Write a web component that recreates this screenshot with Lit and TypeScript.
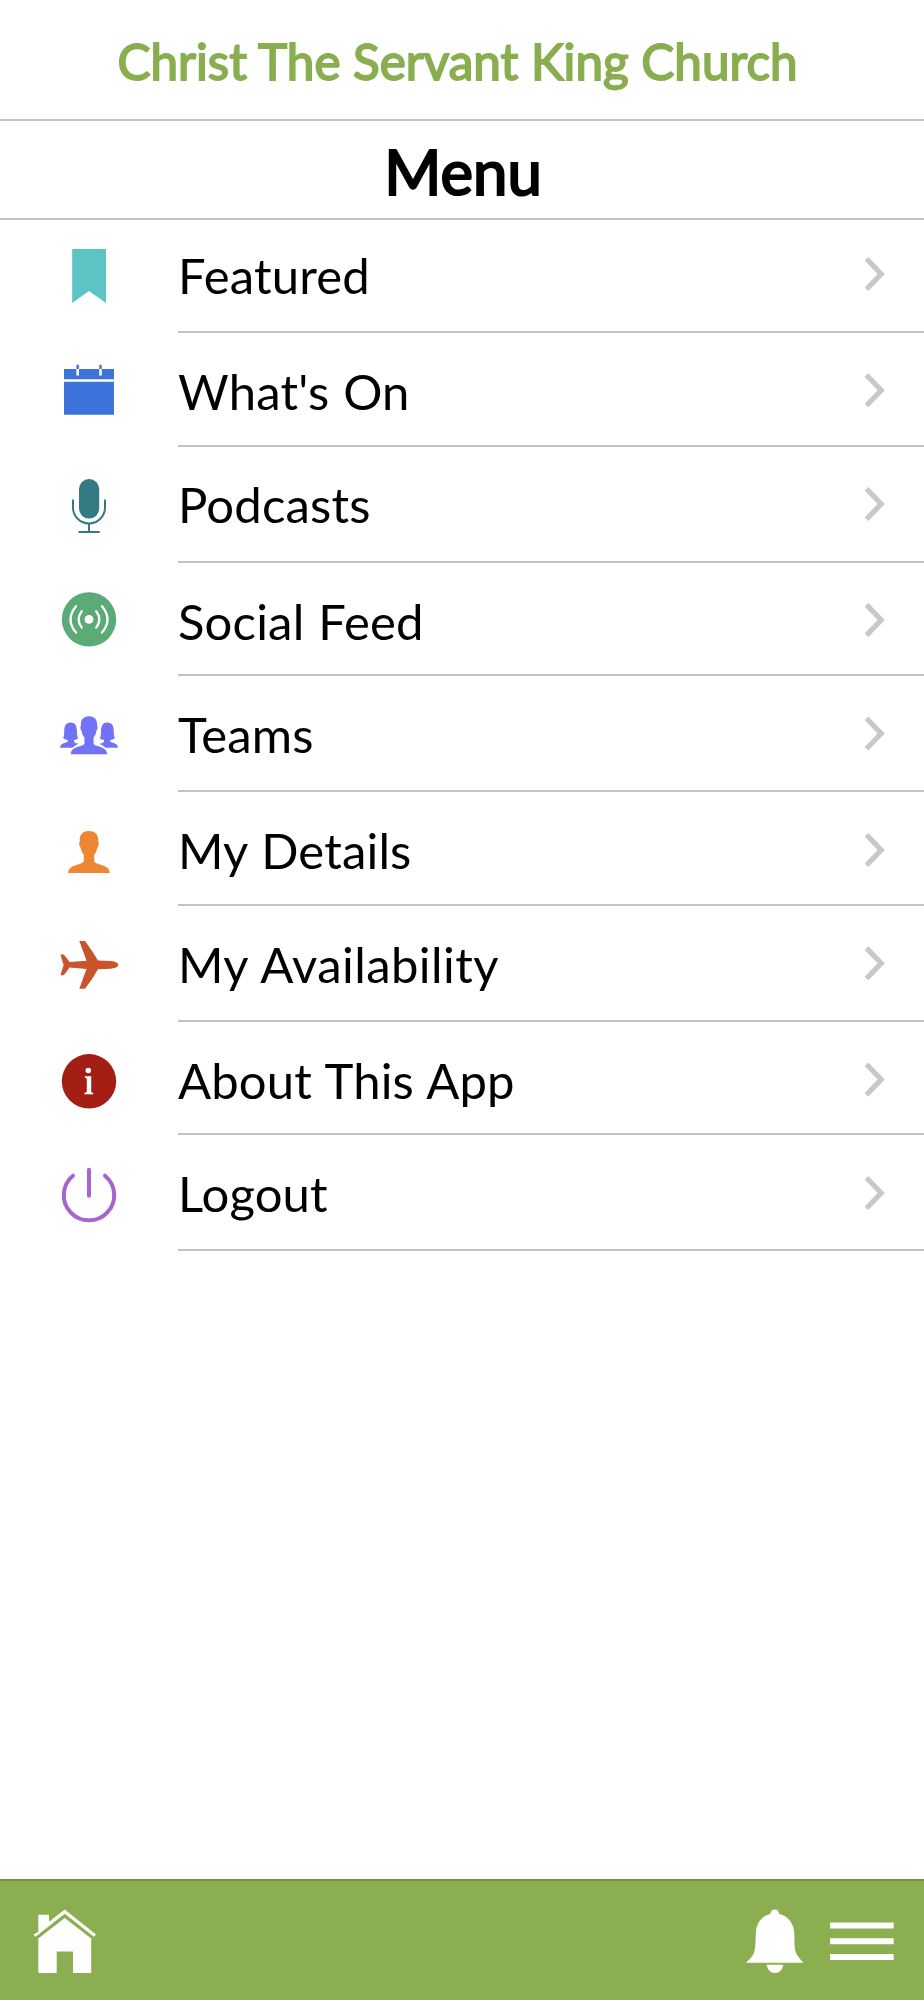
import { LitElement, html, css, svg } from "lit";
import { customElement } from "lit/decorators.js";

const person = "M0-20.3C7-20.3 9.9-15.5 9.2-9.5C10.5-9 9.6-5 8.4-4C7.8-.5 6.8 1.5 5.2 3.2V9.5C5.8 13.8 20.8 12.2 20.8 21.7H-20.8C-20.8 12.2-5.8 13.8-5.2 9.5V3.2C-6.8 1.5-7.8-.5-8.4-4C-9.6-5-10.5-9-9.2-9.5C-9.9-15.5-7-20.3 0-20.3Z";
const woman = "M-18.3-12.8C-13-12.8-12-8-12-3.5C-12 0-11.5 2-10.7 2.8Q-12.5 4.3-15 4.5V6.5Q-13 8.2-10.5 8.3Q-14 9.8-16.5 12.4H-29C-28.8 6.8-22 8-21.3 5.8V4.5Q-24 4.3-25.8 2.8C-25 0-24.8-1-24.8-4C-24.7-9-23.5-12.8-18.3-12.8Z";

/* Each glyph is drawn around its own origin, the centre of the icon column. */
const glyphs = {
  bookmark: svg`<path fill="#5dc4c5" d="M-16.8-27H17V27L0 15L-16.8 27Z"/>`,
  calendar: svg`<path fill="#3c74dc" d="M-25-21H25V-10.8H-25ZM-25-8.3H25V24.7H-25Z"/>
    <path stroke="#fff" stroke-width="2.6" d="M-11.3-21V-14.4M11.5-21V-14.4"/>
    <path stroke="#3c74dc" stroke-width="2.4" d="M-11.3-25.2V-21M11.5-25.2V-21"/>`,
  mic: svg`<rect x="-10" y="-27" width="20.2" height="39.6" rx="10" fill="#337b82"/>
    <path fill="none" stroke="#337b82" stroke-width="2" d="M-16-6.5V1.5A16 16 0 0 0 16 1.5V-6.5M0 17.5V26M-10.5 26H10.7"/>`,
  social: svg`<circle r="27.2" fill="#5bab76"/><circle r="4.4" fill="#fff"/>
    <path fill="none" stroke="#fff" stroke-width="2.3" stroke-linecap="round" d="M-7.2-8.2Q-13.6 0-7.2 8.2M7.2-8.2Q13.6 0 7.2 8.2M-13-13.2Q-24 0-13 13.2M13-13.2Q24 0 13 13.2"/>`,
  teams: svg`<g fill="#7272f7"><path d="${woman}"/><path transform="scale(-1 1)" d="${woman}"/>
    <path stroke="#fff" stroke-width="3" paint-order="stroke" transform="translate(0 -.8) scale(.875 .9)" d="${person}"/></g>`,
  person: svg`<path fill="#ee8733" d="${person}"/>`,
  plane: svg`<path fill="#c9542b" d="M-9.7-24H-4Q3.5-14 9-4.4L22-3.9Q29.3-3 29.3-.2T22 3.7L9 4.2Q3.5 14-4 23.8H-9.7L-2.5 4L-19.5 2.6Q-22 6.5-25.3 10.2H-28.6L-25.4-.1L-28.6-10.5H-25.3Q-22-7-19.5-3L-2.5-4.3Z"/>`,
  info: svg`<circle r="27.2" fill="#a31f16"/><g fill="#fff"><circle cx="-.7" cy="-10.8" r="2.8"/><path d="M-4.3-5H2.2V10.3Q2.4 11.5 4.3 11.8V13H-4.6V11.8Q-2.3 11.5-2.2 10.3V-2.4Q-2.3-3.6-4.3-3.8Z"/></g>`,
  power: svg`<path fill="none" stroke="#a864cc" stroke-width="4" stroke-linecap="round" d="M0-25V1M-16-19A25.2 25.2 0 1 0 16-19"/>`,
};

type Item = { label: string; glyph: keyof typeof glyphs; h: number; iy: number; base: number; cy: number; track?: number };
const items: Item[] = [
  { label: "Featured", glyph: "bookmark", h: 113, iy: 56, base: 74, cy: 54 },
  { label: "What's On", glyph: "calendar", h: 114, iy: 57, base: 77, cy: 57.3 },
  { label: "Podcasts", glyph: "mic", h: 116, iy: 59, base: 76, cy: 57 },
  { label: "Social Feed", glyph: "social", h: 113, iy: 56.4, base: 77, cy: 57 },
  { label: "Teams", glyph: "teams", h: 116, iy: 59.4, base: 77, cy: 57.5 },
  { label: "My Details", glyph: "person", h: 114, iy: 59.4, base: 77, cy: 58 },
  { label: "My Availability", glyph: "plane", h: 116, iy: 59, base: 77, cy: 57.3, track: 0.44 },
  { label: "About This App", glyph: "info", h: 113, iy: 59.3, base: 77, cy: 57.5 },
  { label: "Logout", glyph: "power", h: 116, iy: 59.7, base: 77, cy: 58 },
];

@customElement("app-root")
export class AppRoot extends LitElement {
  static styles = css`
    :host { display: flex; flex-direction: column; height: 2000px; width: 924px; background: #fff; color: #000;
      font-family: Lato, "Liberation Sans", sans-serif; overflow: hidden; }
    .title, .heading { box-sizing: border-box; text-align: center; border-bottom: 2px solid #c4c4c6; white-space: nowrap; }
    .title { height: 121px; padding: 29px 9px 0 0; font-size: 49.4px; line-height: 64px; color: #89ae4f; -webkit-text-stroke: 1.8px #89ae4f; }
    .heading { height: 99px; padding: 10px 0 0 2px; font-size: 61.6px; line-height: 80px; -webkit-text-stroke: 2.2px #000; }
    .row { display: grid; grid-template-columns: 178px 1fr; }
    .row svg { display: block; }
    .glyph { width: 178px; height: 110px; }
    .body { box-sizing: border-box; display: flex; justify-content: space-between; border-bottom: 2px solid #c3c3c8; height: 100%; }
    .label { font-size: 49px; line-height: 60px; white-space: nowrap; word-spacing: 1.1px; }
    .chevron { width: 70px; height: 100px; }
    .spacer { flex: 1; }
    .bar { box-sizing: border-box; height: 121px; border-top: 2px solid #769540; background: #8aae50; display: flex;
      justify-content: space-between; align-items: flex-start; padding: 28px 30px 0 33px; }
    .actions { display: flex; gap: 25px; }
  `;

  render() {
    return html`
      <header class="title">Christ The Servant King Church</header>
      <div class="heading">Menu</div>
      <nav>
        ${items.map((it) => html`
          <div class="row" style="height:${it.h}px">
            <svg class="glyph" viewBox="0 0 178 110"><g transform="translate(89 ${it.iy})">${glyphs[it.glyph]}</g></svg>
            <div class="body">
              <span class="label" style="padding-top:${it.base - 49}px;letter-spacing:${it.track ?? 0.18}px">${it.label}</span>
              <svg class="chevron" viewBox="0 0 70 100"><path transform="translate(0 ${it.cy})" fill="none" stroke="#c7c7cc" stroke-width="5.2" d="M12.5-15.2L27.2 0L12.5 15.2"/></svg>
            </div>
          </div>`)}
      </nav>
      <div class="spacer"></div>
      <footer class="bar">
        <svg width="64" height="66" viewBox="33 1909 64 66" fill="#fff">
          <path d="M38.3 1932V1914.7H49V1921.8L64.7 1909.5L96 1934.5L93.8 1936.8L64.7 1913.8L35.6 1936.8L33.4 1934.5Z"/>
          <path d="M64.7 1918L91.2 1938.6V1973H73V1951.5H56.7V1973H38.3V1938.6Z"/>
        </svg>
        <div class="actions">
          <svg width="58" height="66" viewBox="746 1909 58 66" fill="#fff">
            <path d="M774.7 1909.5C777.5 1909.5 778.8 1911.4 779.2 1914C788.5 1916.2 793.7 1923.5 794.3 1933C794.7 1940 793.8 1948 796.5 1954C798.5 1957.8 801 1959.8 803.6 1962.8H746C748.6 1959.8 751.5 1957.8 753.5 1954C756 1948 755.4 1940 755.8 1933C756.4 1923.5 761 1916.2 770.3 1914C770.6 1911.4 772 1909.5 774.7 1909.5ZM766.7 1964.8H783.2C782.5 1970 779.5 1973 775 1973S767.5 1970 766.7 1964.8Z"/>
          </svg>
          <svg width="65" height="66" viewBox="829 1909 65 66"><path stroke="#fff" stroke-width="6" d="M830 1925.5H893.7M830 1941.3H893.7M830 1957H893.7"/></svg>
        </div>
      </footer>`;
  }
}
